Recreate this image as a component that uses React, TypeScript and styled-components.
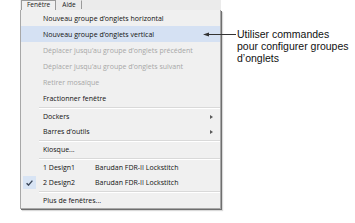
import styled, { createGlobalStyle } from 'styled-components'

const GlobalStyle = createGlobalStyle`
  html, body {
    margin: 0;
    padding: 0;
    background: #ffffff;
  }
  body {
    font-family: "Open Sans", "Noto Sans", sans-serif;
  }
`

interface IItem {
  label: string
  extra?: string
  disabled?: boolean
  active?: boolean
  checked?: boolean
  submenu?: boolean
}

const topItems: IItem[] = [
  { label: 'Nouveau groupe d’onglets horizontal' },
  { label: 'Nouveau groupe d’onglets vertical', active: true },
  { label: 'Déplacer jusqu’au groupe d’onglets précédent', disabled: true },
  { label: 'Déplacer jusqu’au groupe d’onglets suivant', disabled: true },
  { label: 'Retirer mosaïque', disabled: true },
  { label: 'Fractionner fenêtre' }
]

const lowerGroups: IItem[][] = [
  [
    { label: 'Dockers', submenu: true },
    { label: 'Barres d’outils', submenu: true }
  ],
  [{ label: 'Kiosque...' }],
  [
    { label: '1 Design1', extra: 'Barudan FDR-II Lockstitch' },
    { label: '2 Design2', extra: 'Barudan FDR-II Lockstitch', checked: true }
  ],
  [{ label: 'Plus de fenêtres...' }]
]

const MenuRow = ({ item }: { item: IItem }): JSX.Element => (
  <Item $disabled={item.disabled} $active={item.active}>
    <Gutter>
      {item.checked ? (
        <CheckBox>
          <svg width="7" height="6" viewBox="0 0 7 6">
            <path d="M0.6 3.2 L2.5 5.1 L6.4 0.6" fill="none" stroke="#3a4658" strokeWidth="1.4" />
          </svg>
        </CheckBox>
      ) : null}
    </Gutter>
    <Label $wide={!!item.extra}>{item.label}</Label>
    {item.extra ? <Extra>{item.extra}</Extra> : null}
    {item.submenu ? <SubArrow /> : null}
  </Item>
)

const App = (): JSX.Element => {
  return (
    <Page>
      <GlobalStyle />
      <MenuColumn>
        <MenuBar>
          <MenuTab $open>Fenêtre</MenuTab>
          <MenuTab>Aide</MenuTab>
        </MenuBar>
        <Dropdown>
          <Group $row={16}>
            {topItems.map(item => (
              <MenuRow key={item.label} item={item} />
            ))}
          </Group>
          {lowerGroups.map((group, i) => (
            <Group key={i} $row={15}>
              <Separator />
              {group.map(item => (
                <MenuRow key={item.label} item={item} />
              ))}
            </Group>
          ))}
        </Dropdown>
      </MenuColumn>
      <Callout>
        <svg width="33" height="7" viewBox="0 0 33 7">
          <path d="M0 3.5 L6 1.5 L6 5.5 Z" fill="#333" />
          <line x1="5" y1="3.5" x2="33" y2="3.5" stroke="#333" strokeWidth="1" />
        </svg>
        <CalloutText>
          Utiliser commandes
          <br />
          pour configurer groupes
          <br />
          d’onglets
        </CalloutText>
      </Callout>
    </Page>
  )
}

const Page = styled.div`
  display: flex;
  align-items: flex-start;
  width: 355px;
  height: 223px;
  overflow: hidden;
`
const MenuColumn = styled.div`
  margin-left: 20px;
  width: 201px;
  flex-shrink: 0;
  display: flex;
  flex-direction: column;
`
const MenuBar = styled.div`
  height: 10px;
  background: #ebebeb;
  display: flex;
  align-items: flex-end;
  padding-left: 1px;
`
const MenuTab = styled.div<{ $open?: boolean }>`
  height: ${p => (p.$open ? '9px' : '8px')};
  padding: 0 5px;
  font-size: 6.5px;
  line-height: 8px;
  color: #1a1a1a;
  background: ${p => (p.$open ? '#f0f0f0' : 'transparent')};
  border: 1px solid ${p => (p.$open ? '#9a9a9a' : 'transparent')};
  border-bottom: none;
  border-right-color: #9a9a9a;
  position: relative;
  top: ${p => (p.$open ? '0' : '-1px')};
`
const Dropdown = styled.div`
  background: #f0f0f0;
  border: 1px solid #a8a8a8;
  border-top: none;
  box-shadow: 1px 1px 0 #6e6e6e, 2px 2px 1px rgba(0, 0, 0, 0.15);
`
const Group = styled.div<{ $row: number }>`
  --row: ${p => p.$row}px;
`
const Item = styled.div<{ $disabled?: boolean; $active?: boolean }>`
  height: var(--row);
  display: flex;
  align-items: center;
  padding-right: 7px;
  font-size: 7px;
  color: ${p => (p.$disabled ? '#a7a7a7' : '#111')};
  background: ${p => (p.$active ? '#d5e1f3' : 'transparent')};
  white-space: nowrap;
`
const Gutter = styled.div`
  width: 22px;
  flex-shrink: 0;
  display: flex;
  align-items: center;
  padding-left: 2px;
  box-sizing: border-box;
`
const CheckBox = styled.div`
  width: 13px;
  height: 13px;
  background: #d8e4f4;
  display: flex;
  align-items: center;
  justify-content: center;
`
const Label = styled.span<{ $wide?: boolean }>`
  width: ${p => (p.$wide ? '52px' : 'auto')};
  flex-shrink: 0;
`
const Extra = styled.span`
  flex-shrink: 0;
`
const SubArrow = styled.span`
  margin-left: auto;
  width: 0;
  height: 0;
  border-top: 2.5px solid transparent;
  border-bottom: 2.5px solid transparent;
  border-left: 3px solid #5a5a5a;
`
const Separator = styled.div`
  height: 3px;
  margin-left: 18px;
  display: flex;
  align-items: center;
  &::before {
    content: '';
    flex: 1;
    height: 1px;
    background: #d9d9d9;
    box-shadow: 0 1px 0 #ffffff;
  }
`
const Callout = styled.div`
  display: flex;
  align-items: flex-start;
  margin-left: -18px;
  margin-top: 31px;
  position: relative;
`
const CalloutText = styled.div`
  margin-left: 1px;
  margin-top: -3px;
  font-family: "Liberation Sans", Arial, sans-serif;
  font-size: 10.5px;
  line-height: 12px;
  color: #111;
  white-space: nowrap;
`

export default App
